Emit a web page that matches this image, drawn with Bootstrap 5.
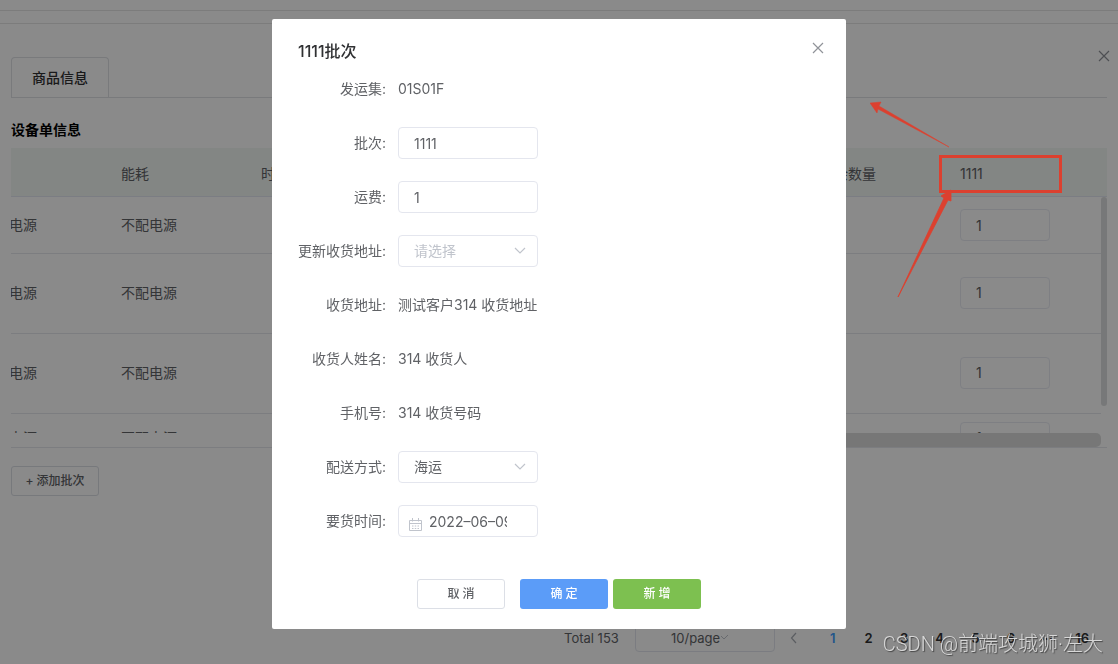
<!DOCTYPE html>
<html lang="zh-CN">
<head>
<meta charset="utf-8">
<meta name="viewport" content="width=device-width, initial-scale=1">
<title>1111批次</title>
<link href="https://cdn.jsdelivr.net/npm/bootstrap@5.3.0/dist/css/bootstrap.min.css" rel="stylesheet">
<style>
  :root { --ink: #606266; --line: #e6e8ec; --soft: #c0c4cc; }
  body { font-family: Inter, "Noto Sans CJK SC", sans-serif; font-size: 14px; line-height: 20px; color: var(--ink); overflow: hidden; }
  .top-strip { height: 24px; padding-top: 10px; }
  .top-strip div { height: 14px; border: solid #e6e6e6; border-width: 1px 0; }
  .sheet { padding: 33px 11px 0; }
  .sheet-tabs { border-bottom: 1px solid #dfe1e5; }
  .sheet-tab { height: 40px; width: 98px; border: 1px solid #dfe1e5; border-bottom: 0; border-radius: 4px 4px 0 0; background: none; color: #303133; font-weight: 500; padding: 0; }
  .sheet h2 { font-size: 14px; line-height: 20px; font-weight: 700; color: #000; margin: 22px 0 8px; }
  .icon-btn { border: 0; background: none; padding: 0; line-height: 0; }
  .sheet-close { position: absolute; top: 50px; right: 8px; }
  .grid-box { height: 300px; border-bottom: 1px solid var(--line); margin-bottom: 18px; }
  .grid-view { height: 285px; overflow: hidden; }
  .grid-view table { width: 100%; table-layout: fixed; border-collapse: separate; border-spacing: 0; }
  .grid-view th { height: 49px; background: #f2f7f4; font-weight: 400; padding: 4px 10px 0; border-bottom: 1px solid #e4e8f2; }
  .grid-view td { height: 80px; padding: 0 10px 2px; border-bottom: 1px solid var(--line); }
  .grid-view tr.short-row td { height: 57px; padding-bottom: 0; }
  .grid-view tr.cut-row td { height: 48px; padding-bottom: 0; }
  .grid-view td:first-child { padding-left: 0; padding-right: 74px; }
  .field { width: 100%; height: 32px; border: 1px solid #e4e6ee; border-radius: 4px; padding: 0 15px; font-size: 14px; color: var(--ink); background: #fff; appearance: none; outline: 0; }
  .grid-view .field { width: 90px; display: block; border-color: #e9ebf3; }
  .v-track { position: absolute; right: 0; top: 49px; width: 6px; height: 236px; background: #fff; }
  .v-track div { height: 209px; border-radius: 3px; background: #dddedf; }
  .h-bar { position: absolute; right: 6px; bottom: 0; left: 40%; height: 14px; border-radius: 5px; background: #dcdddd; }
  .small-btn { height: 30px; width: 88px; font-size: 12px; line-height: 18px; padding: 0; border-radius: 3px; font-weight: 500; }
  .plain-btn, .plain-btn:hover { border: 1px solid #dcdfe6; color: var(--ink); background: #fff; }
  .pager { position: absolute; right: 18px; bottom: 12px; width: 536px; height: 28px; font-size: 13px; }
  .page-size { width: 140px; margin-left: 15px; }
  .total { width: 56px; }
  .page-size select { height: 28px; font-size: 13px; padding: 0 35px; }
  .page-size svg { position: absolute; right: 47px; top: 11px; }
  .pager-nums { flex: 1; margin: 0 0 0 17px; }
  .pager-nums li { flex: 1 1 0; }
  .pager-nums a { color: #303133; font-weight: 600; text-decoration: none; }
  .pager-nums a.on { color: #409eff; }
  .pager-prev { margin-left: 15px; }
  .shade { position: absolute; inset: 0; background: rgba(0,0,0,.46); }
  .batch-dialog { width: 574px; max-width: 100%; margin: 19px auto 0; }
  .batch-dialog .modal-content { border: 0; border-radius: 2px; color: var(--ink); }
  .batch-dialog h1 { font-size: 16px; line-height: 22px; font-weight: 500; color: #303133; margin: 0; }
  .batch-head { padding: 21px 22px 11px 26px; }
  .batch-head svg { margin-top: 2px; }
  .batch-form { padding-left: 14px; }
  .form-line { min-height: 32px; margin-bottom: 22px; }
  .form-line > label, .form-line > .name { width: 112px; padding-right: 12px; text-align: right; flex: none; white-space: nowrap; }
  .form-line .slot { width: 140px; position: relative; }
  .slot svg.caret { position: absolute; right: 12px; top: 12px; }
  .slot svg.cal { position: absolute; left: 11px; top: 13px; }
  .slot .date-field { padding: 0 30px; }
  .empty-pick { color: var(--soft); }
  .batch-foot { padding: 20px 0; }
  .ok-btn, .ok-btn:hover { background: #5b9cf8; border: 0; color: #fff; margin-left: 15px; }
  .new-btn, .new-btn:hover { background: #7dc050; border: 0; color: #fff; margin-left: 5px; }
  .notes { position: absolute; right: 54px; top: 100px; z-index: 1060; pointer-events: none; }
  .signature { position: absolute; right: 15px; bottom: 5px; z-index: 1061; font: 300 20px/30px Roboto, "Noto Sans CJK SC", sans-serif; color: rgba(225,225,225,.9); text-shadow: 1px 1px 1px rgba(40,40,40,.7); white-space: nowrap; }
</style>
</head>
<body>
<div class="position-relative min-vh-100 bg-white">
  <div class="top-strip"><div></div></div>
  <main class="sheet">
    <button class="icon-btn sheet-close" aria-label="关闭"><svg width="12" height="12" fill="none" stroke="#909399" stroke-width="1.2"><path d="M1 1l10 10M11 1L1 11"/></svg></button>
    <div class="sheet-tabs d-flex"><button class="sheet-tab">商品信息</button></div>
    <h2>设备单信息</h2>
    <div class="grid-box position-relative">
      <div class="grid-view">
        <table>
          <colgroup><col style="width:100px"><col style="width:140px"><col style="width:140px"><col><col style="width:140px"><col style="width:157px"></colgroup>
          <thead><tr><th></th><th>能耗</th><th>时间</th><th></th><th>剩余数量</th><th>1111</th></tr></thead>
          <tbody>
            <tr class="short-row"><td><div class="d-flex justify-content-end overflow-hidden text-nowrap"><span>不配电源</span></div></td><td>不配电源</td><td></td><td></td><td></td><td><input class="field" value="1" aria-label="1111 数量"></td></tr>
            <tr><td><div class="d-flex justify-content-end overflow-hidden text-nowrap"><span>不配电源</span></div></td><td>不配电源</td><td></td><td></td><td></td><td><input class="field" value="1" aria-label="1111 数量"></td></tr>
            <tr><td><div class="d-flex justify-content-end overflow-hidden text-nowrap"><span>不配电源</span></div></td><td>不配电源</td><td></td><td></td><td></td><td><input class="field" value="1" aria-label="1111 数量"></td></tr>
            <tr class="cut-row"><td><div class="d-flex justify-content-end overflow-hidden text-nowrap"><span>不配电源</span></div></td><td>不配电源</td><td></td><td></td><td></td><td><input class="field" value="1" aria-label="1111 数量"></td></tr>
          </tbody>
        </table>
      </div>
      <div class="v-track"><div></div></div>
      <div class="h-bar"></div>
    </div>
    <button class="btn small-btn plain-btn d-block">+ 添加批次</button>
  </main>
  <nav class="pager d-flex align-items-center" aria-label="分页">
    <span class="total text-nowrap">Total 153</span>
    <div class="page-size position-relative">
      <select class="field" aria-label="每页条数"><option>10/page</option></select>
      <svg width="8" height="6" fill="none" stroke="#c0c4cc"><path d="M1 1l3 3 4-4"/></svg>
    </div>
    <button class="icon-btn pager-prev" aria-label="上一页"><svg width="8" height="12" fill="none" stroke="#a9adb5" stroke-width="1.2"><path d="M6 1L1.500 6 6 11"/></svg></button>
    <ul class="pager-nums list-unstyled d-flex text-center">
      <li><a class="on" href="#">1</a></li><li><a href="#">2</a></li><li><a href="#">3</a></li><li><a href="#">4</a></li><li><a href="#">5</a></li><li><a href="#">6</a></li><li><a href="#">···</a></li><li><a href="#">16</a></li>
    </ul>
  </nav>
  <div class="shade"></div>

  <div class="modal d-block overflow-hidden" role="dialog" aria-labelledby="batchTitle">
    <div class="modal-dialog batch-dialog">
      <div class="modal-content">
        <div class="batch-head d-flex justify-content-between">
          <h1 id="batchTitle">1111批次</h1>
          <button class="icon-btn align-self-start" aria-label="关闭"><svg width="12" height="12" fill="none" stroke="#909399" stroke-width="1.2"><path d="M1 1l10 10M11 1L1 11"/></svg></button>
        </div>
        <form class="batch-form">
          <div class="form-line d-flex align-items-center"><span class="name">发运集:</span><span>01S01F</span></div>
          <div class="form-line d-flex align-items-center"><label for="f1">批次:</label><div class="slot"><input id="f1" class="field" value="1111"></div></div>
          <div class="form-line d-flex align-items-center"><label for="f2">运费:</label><div class="slot"><input id="f2" class="field" value="1"></div></div>
          <div class="form-line d-flex align-items-center"><label for="f3">更新收货地址:</label><div class="slot"><select id="f3" class="field empty-pick"><option>请选择</option></select><svg class="caret" width="12" height="8" fill="none" stroke="#c0c4cc" stroke-width="1.2"><path d="M1 1l5 5 5-5"/></svg></div></div>
          <div class="form-line d-flex align-items-center"><span class="name">收货地址:</span><span>测试客户314 收货地址</span></div>
          <div class="form-line d-flex align-items-center"><span class="name">收货人姓名:</span><span>314 收货人</span></div>
          <div class="form-line d-flex align-items-center"><span class="name">手机号:</span><span>314 收货号码</span></div>
          <div class="form-line d-flex align-items-center"><label for="f4">配送方式:</label><div class="slot"><select id="f4" class="field"><option>海运</option></select><svg class="caret" width="12" height="8" fill="none" stroke="#c0c4cc" stroke-width="1.2"><path d="M1 1l5 5 5-5"/></svg></div></div>
          <div class="form-line d-flex align-items-center"><label for="f5">要货时间:</label><div class="slot"><input id="f5" class="field date-field" value="2022–06–09"><svg class="cal" width="13" height="13" fill="none" stroke="#c0c4cc"><path d="M.5 2.500h12v10H.5zM.5 5.500h12M3.500 0v3.500M9.500 0v3.500"/><path d="M3 8h7M3 10.500h7" stroke-dasharray="1.500 1.250"/></svg></div></div>
        </form>
        <div class="batch-foot d-flex justify-content-center">
          <button class="btn small-btn plain-btn">取 消</button>
          <button class="btn small-btn ok-btn">确 定</button>
          <button class="btn small-btn new-btn">新 增</button>
        </div>
      </div>
    </div>
  </div>

  <svg class="notes" width="194" height="200" fill="#dc402f" aria-hidden="true">
    <path d="M0 3l11-1-2 4 70 41L8 9l-1 4z" stroke="#dc402f" stroke-width=".5"/>
    <path d="M28 197L74 98l-3-2 10-6v11l-3-1z" stroke="#dc402f" stroke-width=".8"/>
    <rect x="70.500" y="56.500" width="120" height="35" fill="none" stroke="#dc402f" stroke-width="3"/>
  </svg>
  <div class="signature">CSDN @前端攻城狮·左大</div>
</div>
<script src="https://cdn.jsdelivr.net/npm/bootstrap@5.3.0/dist/js/bootstrap.bundle.min.js"></script>
</body>
</html>
